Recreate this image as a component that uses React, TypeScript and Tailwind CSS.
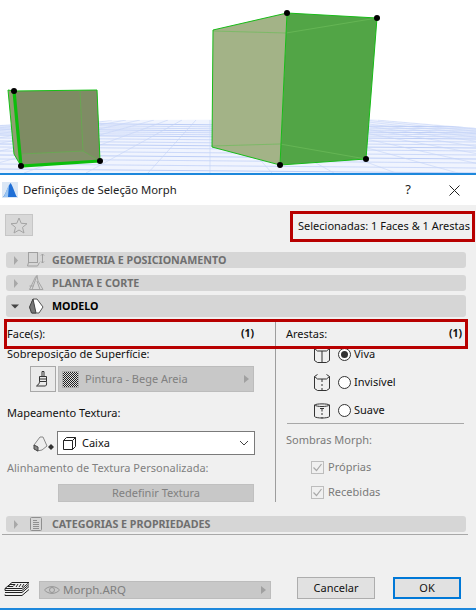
import React from "react";

const font = { fontFamily: '"Noto Sans", "Open Sans", sans-serif' };

function Scene() {
  const h: React.ReactNode[] = [];
  const ys = [121, 123, 125, 127, 129, 131, 133, 136, 139, 142, 145, 149, 153, 157, 162, 167, 172];
  ys.forEach((y, i) => {
    h.push(<line key={"h" + i} x1={0} y1={y + 2} x2={476} y2={y + 6} stroke="#bccdf6" strokeWidth={i % 3 === 0 ? 1 : 0.7} />);
  });
  const v: React.ReactNode[] = [];
  for (let i = -14; i <= 22; i++) {
    const x1 = 210 + i * 14;
    const x2 = 210 + i * 62;
    v.push(<line key={"v" + i} x1={x1} y1={120} x2={x2} y2={173} stroke="#c4d3f6" strokeWidth={0.6} />);
  }
  const dots = [[14, 91], [21, 166], [100, 161], [287, 13], [377, 18], [366, 159], [280, 165]];
  return (
    <svg width="476" height="173" viewBox="0 0 476 173" className="block">
      <rect width="476" height="173" fill="#ffffff" />
      <clipPath id="g"><polygon points="0,125 120,120 370,119 476,128 476,173 0,173" /></clipPath>
      <polygon points="0,125 120,120 370,119 476,128 476,173 0,173" fill="#f0f4fe" />
      <g clipPath="url(#g)">{h}{v}</g>

      <polygon points="8,90 14,91 21,166 14,154" fill="#8f9f72" />
      <polygon points="14,91 97,90 100,161 21,166" fill="#7e8b63" />
      <polygon points="80,91 97,90 100,161 83,151" fill="#7f8c65" />
      <polygon points="22,154 83,151 100,161 21,166" fill="#82906a" />
      <g fill="none" stroke="#62b04c" strokeWidth="0.7">
        <polyline points="80,91 83,151 22,154" />
        <line x1="83" y1="151" x2="100" y2="161" />
      </g>
      <polyline points="14,91 8,90 14,154 21,166" fill="none" stroke="#16c016" strokeWidth="1" />
      <polyline points="14,91 97,90 100,161" fill="none" stroke="#16c016" strokeWidth="1" />
      <polyline points="14,91 21,166 100,161" fill="none" stroke="#0cbe0c" strokeWidth="3.2" />

      <polygon points="213,30 287,13 280,165 212,147" fill="#a3b387" />
      <polygon points="287,13 377,18 366,159 280,165" fill="#52a546" />
      <g fill="none" stroke="#6dbb5a" strokeWidth="0.7">
        <polyline points="213,31 286,33 377,18" />
        <polyline points="212,146 280,144 366,159" />
      </g>
      <polygon points="213,30 287,13 377,18 366,159 280,165 212,147" fill="none" stroke="#18bb18" strokeWidth="1" />
      <line x1="287" y1="13" x2="280" y2="165" stroke="#18bb18" strokeWidth="1" />

      {dots.map(([x, y], i) => <circle key={i} cx={x} cy={y} r="3" fill="#000" />)}
    </svg>
  );
}

function Caret({ open = false }: { open?: boolean }) {
  return (
    <svg width="8" height="9" viewBox="0 0 8 9" className="shrink-0">
      {open ? <polygon points="0,2.500 8,2.500 4,6.500" fill="#444" /> : <polygon points="2,0 6,4.500 2,9" fill="#a8a8a8" />}
    </svg>
  );
}

function GeoIcon() {
  return (
    <svg width="18" height="16" viewBox="0 0 18 16" fill="none" stroke="#a0a0a0">
      <rect x="1.500" y=".5" width="9" height="10" />
      <path d="M3 .5v-0M1.500 10.500l-1 3.500h10l2-3.500M10.500 11.500" />
      <path d="M15.500 2v9M14 3.500l1.500-1.500 1.500 1.500M14 9.500l1.500 1.500 1.500-1.500" />
    </svg>
  );
}
function PlanIcon() {
  return (
    <svg width="15" height="16" viewBox="0 0 15 16" fill="none" stroke="#a4a4a4">
      <path d="M.5 14.500L6.500 2l1.500-1.500 1 5.500 5 8.500z" />
      <path d="M3 14.500L8 .5M8 6l3 8.500M.5 11h4" />
    </svg>
  );
}
function ModelIcon() {
  return (
    <svg width="15" height="16" viewBox="0 0 15 16">
      <path d="M4 1h4l6 8-4 6H3L1 10z" fill="#fff" stroke="#555" />
      <path d="M4 1 L7 15 H2.500 L.5 9z" fill="#777" stroke="#444" />
    </svg>
  );
}
function DocIcon() {
  return (
    <svg width="12" height="14" viewBox="0 0 12 14" fill="none" stroke="#8f8f8f">
      <rect x=".5" y=".5" width="11" height="13" rx="1" />
      <path d="M3 3.500h4M3 5.500h6M3 7.500h6M3 9.500h6M3 11.500h6" />
    </svg>
  );
}
function Row({ icon, label, open = false, h = "h-4", dark = false }: { icon: React.ReactNode; label: string; open?: boolean; h?: string; dark?: boolean }) {
  return (
    <div className={`${h} mx-[6px] w-[460px] rounded-[3px] bg-[#d6d6d6] flex items-center`}>
      <div className={`w-[11px] ${open ? "ml-[5px] mr-[1px]" : "ml-[6px]"} flex`}><Caret open={open} /></div>
      <div className="w-[26px] flex justify-center">{icon}</div>
      <span className={`text-[10.7px] font-bold ml-[3px] ${dark ? "text-black" : "text-[#6f6f6f]"}`}>{label}</span>
    </div>
  );
}
function EdgeIcon({ v }: { v: number }) {
  return (
    <svg width="16" height="17" viewBox="0 0 16 17" fill="none" stroke="#333" className="shrink-0">
      {v !== 2 && <path d="M.5 2.500l3 2.500h9l3-2.500v12l-3 2H3.500l-3-2z" />}
      {v !== 2 && <path d="M.5 2.500l3-2M15.500 2.500l-3-2" />}
      {v === 2 && <path d="M.5 3C2 1.500 14 1.500 15.500 3v11.500c-1.500 2-13.500 2-15 0zM.5 3c2 2 13 2 15 0" />}
      {v === 0 && <path d="M8 5v11.500" />}
      {v === 1 && <path d="M8 5v3M8 10v2M8 14v2.500" />}
      {v === 2 && <path d="M6 6.500h4M8 6.500v3M8 11v2M8 15v1.500" />}
    </svg>
  );
}
function Radio({ on, label, icon }: { on?: boolean; label: string; icon: number }) {
  return (
    <div className="flex items-center h-[14px] ml-[38px]">
      <EdgeIcon v={icon} />
      <span className="ml-[8px] w-[13px] h-[13px] rounded-full border border-[#333] bg-white flex items-center justify-center">
        {on && <span className="block w-[7px] h-[7px] rounded-full bg-[#333]" />}
      </span>
      <span className="ml-[3px] text-[11px] text-[#111]">{label}</span>
    </div>
  );
}
function Check({ label }: { label: string }) {
  return (
    <div className="flex items-center h-[14px] ml-[25px]">
      <span className="w-[13px] h-[13px] border border-[#bdbdbd] bg-[#f0f0f0] flex items-center justify-center">
        <svg width="11" height="11" viewBox="0 0 11 11" fill="none" stroke="#a8a8a8" strokeWidth="1.200"><path d="M1.500 5.500l3 3 5-6.500" /></svg>
      </span>
      <span className="ml-[4px] text-[11px] text-[#7a7a7a]">{label}</span>
    </div>
  );
}

export default function App() {
  return (
    <div className="w-[476px] h-[610px] bg-[#f0f0f0] overflow-hidden relative" style={font}>
      <Scene />
      <div className="h-[2px] bg-[#1e88dc]" />
      <div className="h-[30px] bg-white flex items-center">
        <svg width="16" height="16" viewBox="0 0 16 16" className="ml-[2px]">
          <rect width="16" height="16" fill="#dbe7f5" />
          <path d="M1 15C3 14 6 4 8.500 1C11 4 13 12 15 15z" fill="#1f6fd6" />
          <path d="M1 15C3 14 5 6 7 3L6 15z" fill="#9cc6f2" />
        </svg>
        <span className="ml-[5px] text-[11.3px] text-[#222]">Definições de Seleção Morph</span>
        <span className="ml-auto mr-[38px] text-[13px] text-[#222]">?</span>
        <svg width="11" height="11" viewBox="0 0 11 11" stroke="#222" className="mr-[16px]"><path d="M.5.5l10 10M10.500.5l-10 10" /></svg>
      </div>

      <div className="h-[47px] flex items-start">
        <div className="mt-[9px] ml-[5px] w-[28px] h-[22px] bg-[#d8d8d8] border border-[#c6c6c6] flex items-center justify-center">
          <svg width="18" height="17" viewBox="0 0 18 17" fill="none" stroke="#a4a4a4"><path d="M9 1l2.200 5.300 5.800.4-4.500 3.700 1.500 5.600L9 13l-5 3 1.500-5.600L1 6.700l5.800-.4z" /></svg>
        </div>
        <div className="ml-auto mt-[6px] mr-[1px] w-[185px] h-[31px] border-[3px] border-[#b80000] flex items-center justify-end pr-[2px]">
          <span className="text-[11px] text-[#111] whitespace-nowrap">Selecionadas: 1 Faces &amp; 1 Arestas</span>
        </div>
      </div>

      <Row icon={<GeoIcon />} label="GEOMETRIA E POSICIONAMENTO" />
      <div className="h-[7px]" />
      <Row icon={<PlanIcon />} label="PLANTA E CORTE" />
      <div className="h-1" />
      <Row icon={<ModelIcon />} label="MODELO" open dark h="h-[22px]" />

      <div className="relative z-10 mt-[2px] mx-[4px] w-[464px] h-[30px] border-[3px] border-[#b80000] flex">
        <div className="w-[268px] flex items-center justify-between pl-0 pr-[21px]">
          <span className="text-[11px] text-[#111]">Face(s):</span>
          <span className="text-[10.5px] font-bold text-[#111]">(1)</span>
        </div>
        <div className="w-px bg-[#9d9d9d]" />
        <div className="flex-1 flex items-center justify-between pl-[10px] pr-[3px]">
          <span className="text-[11px] text-[#111]">Arestas:</span>
          <span className="text-[10.5px] font-bold text-[#111]">(1)</span>
        </div>
      </div>

      <div className="flex h-[153px]">
        <div className="w-[276px] relative text-[11px]">
          <div className="ml-[7px] h-[17px] leading-[10px] text-[#111]">Sobreposição de Superfície:</div>
          <div className="ml-[30px] flex h-[26px]">
            <div className="w-[26px] h-[26px] border border-[#a8a8a8] bg-[#eaeaea] flex items-center justify-center">
              <svg width="14" height="16" viewBox="0 0 14 16" fill="none" stroke="#333"><path d="M6 .5h2v5H6zM3.500 5.500h7v5h-7zM3.500 8h7M3.500 10.500c0 2-1 3-3 4.500h9c1.500-1 1-3 1-4.500" /></svg>
            </div>
            <div className="ml-[2px] w-[196px] h-[26px] bg-[#c8c8c8] border border-[#bcbcbc] flex items-center">
              <div className="ml-[3px] w-[17px] h-[17px] bg-[repeating-conic-gradient(#222_0_25%,#ddd_0_50%)] bg-[length:2px_2px] border border-[#aaa]" />
              <span className="ml-[6px] text-[#808080]">Pintura - Bege Areia</span>
              <svg width="5" height="8" viewBox="0 0 5 8" className="ml-auto mr-[4px]"><polygon points="0,0 5,4 0,8" fill="#a0a0a0" /></svg>
            </div>
          </div>
          <div className="ml-[7px] mt-[12px] h-[27px] leading-[18px] text-[#111]">Mapeamento Textura:</div>
          <div className="flex h-[24px]">
            <svg width="22" height="16" viewBox="0 0 22 16" fill="none" className="ml-[33px] mt-[5px]">
              <path d="M1 9L7 1h3l4 9-5 4-5 1z" stroke="#888" fill="#eee" />
              <path d="M1 9l4 2v4l-4-2z" stroke="#444" fill="#888" />
              <path d="M18 8l3 3-3 3-3-3z" fill="#333" />
            </svg>
            <div className="ml-[2px] w-[198px] h-[24px] bg-white border border-[#7a7a7a] flex items-center">
              <svg width="13" height="13" viewBox="0 0 13 13" fill="none" stroke="#222" className="ml-[5px]"><path d="M.5 3.500h9v9h-9zM.5 3.500l3-3h9v9l-3 3M9.500 3.500l3-3" /></svg>
              <span className="ml-[6px] text-[11px] text-[#111]">Caixa</span>
              <svg width="10" height="6" viewBox="0 0 10 6" fill="none" stroke="#444" className="ml-auto mr-[5px]"><path d="M1 1l4 4 4-4" /></svg>
            </div>
          </div>
          <div className="ml-[7px] mt-[4px] h-[25px] leading-[18px] text-[#808080] whitespace-nowrap">Alinhamento de Textura Personalizada:</div>
          <div className="ml-[58px] w-[196px] h-[18px] bg-[#c8c8c8] border border-[#c0c0c0] flex items-center justify-center text-[#808080]">Redefinir Textura</div>
          <div className="absolute right-0 top-0 bottom-0 w-px bg-[#9d9d9d]" />
        </div>
        <div className="flex-1 flex flex-col -mt-[2px]">
          <Radio on label="Viva" icon={0} />
          <div className="h-[14px]" />
          <Radio label="Invisível" icon={1} />
          <div className="h-[14px]" />
          <Radio label="Suave" icon={2} />
          <div className="ml-[11px] mt-[6px] w-[177px] h-px bg-[#a8a8a8]" />
          <div className="ml-[10px] mt-[8px] text-[11px] leading-[16px] text-[#7a7a7a]">Sombras Morph:</div>
          <div className="ml-[10px] mt-[12px]"><Check label="Próprias" /></div>
          <div className="ml-[10px] mt-[11px]"><Check label="Recebidas" /></div>
        </div>
      </div>

      <div className="mt-[14px]"><Row icon={<DocIcon />} label="CATEGORIAS E PROPRIEDADES" /></div>
      <div className="mt-[2px] ml-[2px] w-[466px] h-px bg-[#a8a8a8]" />

      <div className="mt-[42px] h-[22px] flex items-end">
        <svg width="26" height="16" viewBox="0 0 26 16" fill="none" stroke="#222" className="ml-[4px] mb-[1px]">
          <path d="M8 .5h17l-7 6H1zM1 6.500v2h17l7-6M1 10.500h17l7-6M1 12.500v1h17l7-6M6 2.500h5l-2 2H4zM14 2l-2 3M17 2l-2 3M20 2l-2 3" />
        </svg>
        <div className="ml-[9px] w-[232px] h-[18px] bg-[#c8c8c8] border border-[#bcbcbc] flex items-center text-[11.500px] text-[#808080]">
          <svg width="16" height="10" viewBox="0 0 16 10" fill="none" stroke="#969696" className="ml-[4px]"><path d="M.5 5C4 .5 12 .5 15.500 5 12 9.500 4 9.500.5 5z" /><circle cx="8" cy="5" r="2.500" /></svg>
          <span className="ml-[3px]">Morph.ARQ</span>
          <svg width="5" height="8" viewBox="0 0 5 8" className="ml-auto mr-[4px]"><polygon points="0,0 5,4 0,8" fill="#a0a0a0" /></svg>
        </div>
        <div className="ml-[26px] w-[78px] h-[22px] bg-[#e1e1e1] border border-[#adadad] flex items-center justify-center text-[11px] text-[#111]">Cancelar</div>
        <div className="ml-[18px] w-[68px] h-[22px] bg-[#e1e1e1] border-2 border-[#0078d7] flex items-center justify-center text-[11px] text-[#111]">OK</div>
      </div>
      <div className="absolute left-0 right-0 bottom-0 h-[2px] bg-[#1e88dc]" />
    </div>
  );
}
